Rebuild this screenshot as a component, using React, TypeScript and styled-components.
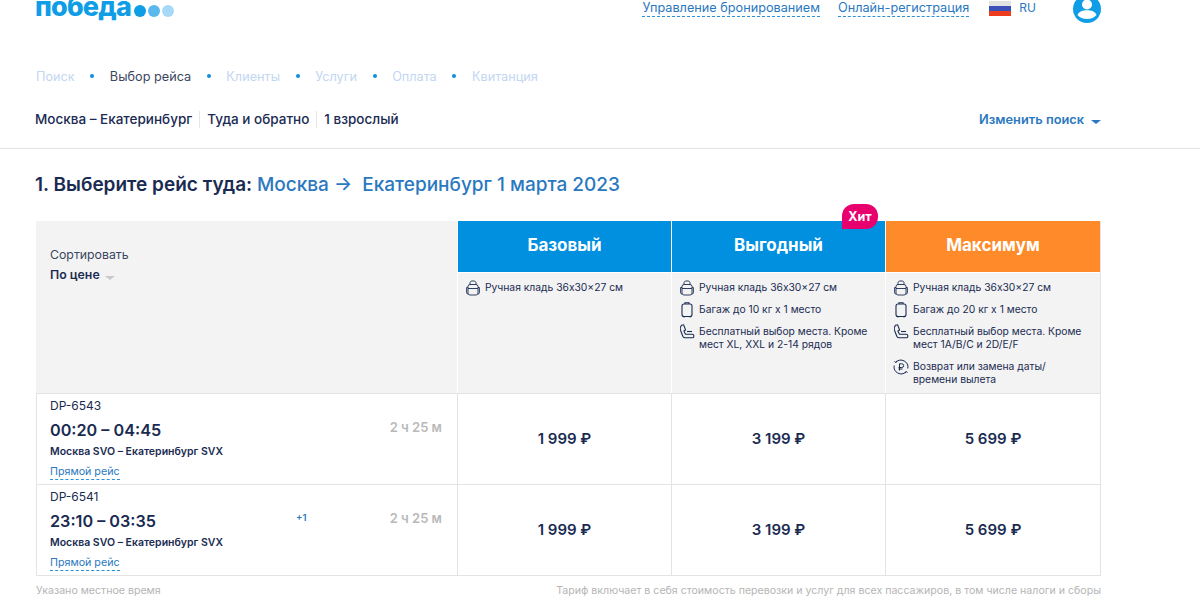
import React from "react";
import styled, { createGlobalStyle } from "styled-components";

const navy = "#1a2b52";
const blue = "#2a78c0";

const steps = [
  { label: "Поиск" },
  { label: "Выбор рейса", active: true },
  { label: "Клиенты" },
  { label: "Услуги" },
  { label: "Оплата" },
  { label: "Квитанция" },
];

const flights = [
  { code: "DP-6543", time: "00:20 – 04:45", route: "Москва SVO – Екатеринбург SVX", plus: "" },
  { code: "DP-6541", time: "23:10 – 03:35", route: "Москва SVO – Екатеринбург SVX", plus: "+1" },
];

const prices = ["1 999 ₽", "3 199 ₽", "5 699 ₽"];

const BagIcon = () => (
  <svg width="16" height="16" viewBox="0 0 16 16" fill="none" stroke={navy} strokeWidth="0.9">
    <rect x="3" y="4.500" width="10" height="10.500" rx="2" />
    <path d="M5 4.500V2.800C5 1.700 6 1 7 1h2c1 0 2 .7 2 1.800v1.700M3 7.500H1.600v5.300c0 .7.500 1.200 1.400 1.200M13 7.500h1.400v5.300c0 .7-.5 1.200-1.400 1.200M3 8.500h10" />
  </svg>
);

const CaseIcon = () => (
  <svg width="16" height="16" viewBox="0 0 16 16" fill="none" stroke={navy} strokeWidth="1.1">
    <rect x="3" y="2" width="10" height="12.500" rx="2" />
    <path d="M6 2V.8h4V2M5 14.500v1M11 14.500v1" />
  </svg>
);

const SeatIcon = () => (
  <svg width="16" height="16" viewBox="0 0 16 16" fill="none" stroke={navy} strokeWidth="1.1">
    <path d="M2.500 1.200 4.600.8l2 5.200-1.700 1 1.500 3.200h6.800c1 0 1.600.6 1.600 1.400v.8c0 .8-.6 1.400-1.500 1.400H6.200C5 13.800 4.300 13.200 3.800 12.200L1.600 6.500C1 4.500 1.400 2.500 2.500 1.200Z" />
    <path d="M8 7.500h5" />
  </svg>
);

const RefundIcon = () => (
  <svg width="16" height="16" viewBox="0 0 16 16" fill="none" stroke={navy} strokeWidth="1">
    <path d="M3 3.200A7 7 0 0 1 14.800 9.500M13 12.800A7 7 0 0 1 1.200 6.500" />
    <path d="M1.500 2.500 3 3.500 4 1.800M14.500 13.500 13 12.500 12 14.200" />
    <path d="M6.500 11.500V4.800h2.300a1.800 1.800 0 0 1 0 3.700H5.500M5.500 10h4" />
  </svg>
);

const icons = { bag: <BagIcon />, case: <CaseIcon />, seat: <SeatIcon />, refund: <RefundIcon /> };

type Feature = { icon: keyof typeof icons; text: React.ReactNode };

const tariffs: { name: string; color: string; hit?: boolean; features: Feature[] }[] = [
  {
    name: "Базовый",
    color: "#0090df",
    features: [{ icon: "bag", text: "Ручная кладь 36x30x27 см" }],
  },
  {
    name: "Выгодный",
    color: "#0090df",
    hit: true,
    features: [
      { icon: "bag", text: "Ручная кладь 36x30x27 см" },
      { icon: "case", text: "Багаж до 10 кг x 1 место" },
      { icon: "seat", text: "Бесплатный выбор места. Кроме мест XL, XXL и 2-14 рядов" },
    ],
  },
  {
    name: "Максимум",
    color: "#ff8a2a",
    features: [
      { icon: "bag", text: "Ручная кладь 36x30x27 см" },
      { icon: "case", text: "Багаж до 20 кг x 1 место" },
      { icon: "seat", text: "Бесплатный выбор места. Кроме мест 1A/B/C и 2D/E/F" },
      { icon: "refund", text: <>Возврат или замена даты/<br />времени вылета</> },
    ],
  },
];

export default function App() {
  return (
    <Page>
      <GlobalStyle />
      <Header>
        <Logo>
          <LogoText>победа</LogoText>
          <LogoDot $color="#0f9de6" />
          <LogoDot $color="#5ab8ec" />
          <LogoDot $color="#a6d9f5" />
        </Logo>
        <HeaderRight>
          <DashedLink>Управление бронированием</DashedLink>
          <DashedLink>Онлайн-регистрация</DashedLink>
          <Lang>
            <Flag />
            RU
          </Lang>
          <Avatar viewBox="0 0 28 28">
            <circle cx="14" cy="14" r="14" fill="#0f9de6" />
            <circle cx="14" cy="9.500" r="5" fill="#fff" />
            <path d="M4.500 20c1.500-3.500 5-4.800 9.500-4.800s8 1.300 9.500 4.800c-2.200 2.500-5.500 4-9.500 4s-7.300-1.500-9.500-4Z" fill="#fff" />
          </Avatar>
        </HeaderRight>
      </Header>

      <Steps>
        {steps.map((s, i) => (
          <React.Fragment key={s.label}>
            {i > 0 && <StepDot />}
            <Step $active={s.active}>{s.label}</Step>
          </React.Fragment>
        ))}
      </Steps>

      <SearchBar>
        <Summary>
          <SummaryItem>Москва – Екатеринбург</SummaryItem>
          <SummaryItem>Туда и обратно</SummaryItem>
          <SummaryItem>1 взрослый</SummaryItem>
        </Summary>
        <ChangeSearch>
          Изменить поиск
          <Caret $color={blue} />
        </ChangeSearch>
      </SearchBar>

      <Content>
        <Title>
          1. Выберите рейс туда: <TitleRoute>Москва → &nbsp;Екатеринбург 1 марта 2023</TitleRoute>
        </Title>

        <Table>
          <SortCell>
            <SortLabel>Сортировать</SortLabel>
            <SortValue>
              По цене
              <Caret $color="#c9c9c9" />
            </SortValue>
          </SortCell>
          {tariffs.map((t) => (
            <TariffHead key={t.name} $color={t.color}>
              {t.name}
              {t.hit && <HitBadge>Хит</HitBadge>}
            </TariffHead>
          ))}
          {tariffs.map((t) => (
            <FeatureCell key={t.name}>
              {t.features.map((f, i) => (
                <FeatureRow key={i}>
                  <FeatureIcon>{icons[f.icon]}</FeatureIcon>
                  <span>{f.text}</span>
                </FeatureRow>
              ))}
            </FeatureCell>
          ))}
          {flights.map((f) => (
            <React.Fragment key={f.code}>
              <FlightCell>
                <FlightInfo>
                  <FlightCode>{f.code}</FlightCode>
                  <FlightTime>{f.time}</FlightTime>
                  <FlightRoute>{f.route}</FlightRoute>
                  <Direct>Прямой рейс</Direct>
                </FlightInfo>
                {f.plus && <PlusDay>{f.plus}</PlusDay>}
                <Duration>2 ч 25 м</Duration>
              </FlightCell>
              {prices.map((p) => (
                <PriceCell key={p}>{p}</PriceCell>
              ))}
            </React.Fragment>
          ))}
        </Table>

        <Footnotes>
          <span>Указано местное время</span>
          <span>Тариф включает в себя стоимость перевозки и услуг для всех пассажиров, в том числе налоги и сборы</span>
        </Footnotes>
      </Content>
    </Page>
  );
}

const GlobalStyle = createGlobalStyle`
  html, body {
    margin: 0;
    background: #fff;
    overflow: hidden;
  }
  * {
    box-sizing: border-box;
  }
`;

const Page = styled.div`
  width: 1200px;
  height: 604px;
  overflow: hidden;
  font-family: Inter, "Noto Sans", sans-serif;
  color: ${navy};
`;

const Header = styled.header`
  height: 22px;
  padding: 0 99px 0 35px;
  display: flex;
  justify-content: space-between;
  align-items: flex-start;
`;

const Logo = styled.div`
  display: flex;
  align-items: center;
  gap: 2px;
  height: 22px;
`;

const LogoText = styled.span`
  font-size: 27px;
  font-weight: 800;
  line-height: 18px;
  letter-spacing: -0.8px;
  color: #0f9de6;
  margin-right: 1px;
  position: relative;
  top: -4px;
`;

const LogoDot = styled.i<{ $color: string }>`
  width: 12px;
  height: 12px;
  border-radius: 50%;
  background: ${({ $color }) => $color};
`;

const HeaderRight = styled.div`
  display: flex;
  align-items: flex-start;
  height: 22px;
`;

const DashedLink = styled.a`
  font-size: 12.700px;
  line-height: 16px;
  color: ${blue};
  border-bottom: 1px dashed #2a90d8;
  margin-right: 18px;
`;

const Lang = styled.div`
  display: flex;
  align-items: center;
  gap: 8px;
  margin-left: 2px;
  font-size: 12px;
  line-height: 16px;
  color: ${blue};
`;

const Flag = styled.i`
  width: 22px;
  height: 15px;
  background: linear-gradient(#e2e2e2 33%, #3d50b8 33% 66%, #ee3d1c 66%);
`;

const Avatar = styled.svg`
  width: 28px;
  height: 28px;
  margin: -5px 0 0 37px;
  flex: none;
`;

const Steps = styled.nav`
  display: flex;
  align-items: center;
  gap: 15.600px;
  margin-top: 45px;
  padding-left: 36px;
  height: 18px;
  font-size: 12.700px;
`;

const Step = styled.span<{ $active?: boolean }>`
  color: ${({ $active }) => ($active ? "#3b4660" : "#c3d6f2")};
`;

const StepDot = styled.i`
  width: 4px;
  height: 4px;
  border-radius: 50%;
  background: #0f8fdc;
`;

const SearchBar = styled.div`
  margin-top: 24px;
  padding: 2px 99px 0 35px;
  display: flex;
  justify-content: space-between;
  align-items: flex-start;
  border-bottom: 1px solid #e3e3e3;
  height: 40px;
`;

const Summary = styled.div`
  display: flex;
  font-size: 13.500px;
  font-weight: 500;
  line-height: 17px;
`;

const SummaryItem = styled.span`
  & + & {
    margin-left: 7px;
    padding-left: 7px;
    border-left: 1px solid #e6e6e6;
  }
`;

const ChangeSearch = styled.div`
  display: flex;
  align-items: center;
  gap: 7px;
  font-size: 12.800px;
  font-weight: 600;
  line-height: 17px;
  color: ${blue};
`;

const Caret = styled.i<{ $color: string }>`
  display: inline-block;
  margin-top: 5px;
  border-left: 5px solid transparent;
  border-right: 5px solid transparent;
  border-top: 4px solid ${({ $color }) => $color};
`;

const Content = styled.main`
  padding: 23px 99px 0 35px;
`;

const Title = styled.h1`
  margin: 0;
  font-size: 19px;
  line-height: 26px;
  font-weight: 600;
`;

const TitleRoute = styled.span`
  color: ${blue};
  font-weight: 500;
`;

const Table = styled.div`
  margin: 23px 0 0 1px;
  display: grid;
  grid-template-columns: 421px 214px 214px 215px;
  grid-template-rows: 52px 120px 91px 91px;
  border-bottom: 1px solid #e3e3e3;
  border-right: 1px solid #e3e3e3;
`;

const SortCell = styled.div`
  grid-row: span 2;
  background: #f3f3f3;
  padding: 26px 14px;
`;

const SortLabel = styled.div`
  font-size: 12.300px;
  line-height: 16px;
  color: #3b4660;
`;

const SortValue = styled.div`
  display: flex;
  align-items: center;
  gap: 5px;
  margin-top: 4px;
  font-size: 12.300px;
  line-height: 16px;
  font-weight: 600;
`;

const TariffHead = styled.div<{ $color: string }>`
  position: relative;
  display: flex;
  align-items: center;
  justify-content: center;
  padding-bottom: 3px;
  background: ${({ $color }) => $color};
  border-left: 1px solid #fff;
  border-bottom: 1px solid #fff;
  color: #fff;
  font-size: 17px;
  font-weight: 700;
`;

const HitBadge = styled.span`
  position: absolute;
  top: -17px;
  right: 7px;
  width: 36px;
  height: 25px;
  display: flex;
  align-items: center;
  justify-content: center;
  padding-bottom: 1px;
  background: #e9006f;
  border-radius: 12px 12px 12px 0;
  font-size: 12.500px;
  font-weight: 700;
`;

const FeatureCell = styled.div`
  background: #f3f3f3;
  border-left: 1px solid #fff;
  padding: 8px 8px 0 7px;
  display: flex;
  flex-direction: column;
  gap: 9px;
`;

const FeatureRow = styled.div`
  display: flex;
  gap: 4px;
  font-size: 10.300px;
  line-height: 13px;
  color: ${navy};
`;

const FeatureIcon = styled.span`
  flex: none;
  width: 16px;
  height: 13px;
  margin-top: -1px;
`;

const FlightCell = styled.div`
  position: relative;
  display: flex;
  justify-content: space-between;
  padding: 4px 15px 0 13px;
  border-left: 1px solid #e3e3e3;
  border-top: 1px solid #e3e3e3;

  &:nth-child(9) {
    border-top: none;
  }
`;

const FlightInfo = styled.div`
  display: flex;
  flex-direction: column;
`;

const FlightCode = styled.div`
  font-size: 12px;
  line-height: 16px;
`;

const FlightTime = styled.div`
  margin-top: 5px;
  font-size: 16.200px;
  font-weight: 600;
  line-height: 22px;
`;

const FlightRoute = styled.div`
  margin-top: 4px;
  font-size: 10.500px;
  font-weight: 600;
  line-height: 14px;
`;

const Direct = styled.a`
  align-self: flex-start;
  margin-top: 6px;
  font-size: 10.700px;
  line-height: 14px;
  color: ${blue};
  border-bottom: 1px dashed #2a90d8;
`;

const PlusDay = styled.span`
  position: absolute;
  left: 259px;
  top: 27px;
  font-size: 9.500px;
  font-weight: 600;
  color: ${blue};
`;

const Duration = styled.div`
  margin-top: 21px;
  font-size: 13px;
  font-weight: 600;
  line-height: 16px;
  color: #b9b9b9;
`;

const PriceCell = styled.div`
  display: flex;
  align-items: center;
  justify-content: center;
  padding-bottom: 2px;
  border-left: 1px solid #e3e3e3;
  border-top: 1px solid #e3e3e3;
  font-size: 15px;
  font-weight: 600;
`;

const Footnotes = styled.div`
  display: flex;
  justify-content: space-between;
  margin: 8px 0 0 1px;
  font-size: 10.600px;
  line-height: 14px;
  color: #b5b5b5;
`;
